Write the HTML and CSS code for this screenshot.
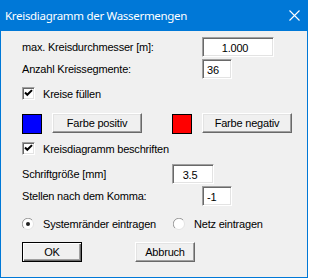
FILE: index.html
```
<!DOCTYPE html>
<html lang="de">
<head>
<meta charset="utf-8">
<title>Kreisdiagramm der Wassermengen</title>
<link rel="stylesheet" href="styles.css">
</head>
<body>
<div class="window">
  <div class="titlebar">
    <span class="title">Kreisdiagramm der Wassermengen</span>
    <svg class="close" width="11" height="11" viewBox="0 0 11 11"><path d="M0.5 0.5 L10.5 10.5 M10.5 0.5 L0.5 10.5" stroke="#fff" stroke-width="1.1" fill="none"/></svg>
  </div>
  <div class="content">
    <div class="row r1">
      <span class="label w180">max. Kreisdurchmesser [m]:</span>
      <div class="field wide center">1.000</div>
    </div>
    <div class="row r2">
      <span class="label w180">Anzahl Kreissegmente:</span>
      <div class="field small">36</div>
    </div>
    <div class="row r3 check-row">
      <span class="checkbox"><svg width="9" height="9" viewBox="0 0 9 9"><path d="M1 3.5 L3.3 5.8 L8 1.1" stroke="#000" stroke-width="2" fill="none"/></svg></span>
      <span class="check-label">Kreise füllen</span>
    </div>
    <div class="row r4">
      <span class="swatch blue"></span>
      <div class="btn color-btn">Farbe positiv</div>
      <span class="swatch red"></span>
      <div class="btn color-btn">Farbe negativ</div>
    </div>
    <div class="row r5 check-row">
      <span class="checkbox"><svg width="9" height="9" viewBox="0 0 9 9"><path d="M1 3.5 L3.3 5.8 L8 1.1" stroke="#000" stroke-width="2" fill="none"/></svg></span>
      <span class="check-label">Kreisdiagramm beschriften</span>
    </div>
    <div class="row r6">
      <span class="label w150">Schriftgröße [mm]</span>
      <div class="field mid center">3.5</div>
    </div>
    <div class="row r7">
      <span class="label w180">Stellen nach dem Komma:</span>
      <div class="field small">-1</div>
    </div>
    <div class="row r8">
      <div class="radio-item first">
        <svg class="radio" width="12" height="12" viewBox="0 0 12 12"><circle cx="6" cy="6" r="5.5" fill="#fff" stroke="#e3e3e3"/><path d="M1.9 10.1 A5.5 5.5 0 0 1 10.1 1.9" stroke="#a0a0a0" fill="none"/><circle cx="6" cy="6" r="2" fill="#222"/></svg>
        <span class="check-label">Systemränder eintragen</span>
      </div>
      <div class="radio-item">
        <svg class="radio" width="12" height="12" viewBox="0 0 12 12"><circle cx="6" cy="6" r="5.5" fill="#fff" stroke="#e3e3e3"/><path d="M1.9 10.1 A5.5 5.5 0 0 1 10.1 1.9" stroke="#a0a0a0" fill="none"/></svg>
        <span class="check-label">Netz eintragen</span>
      </div>
    </div>
    <div class="row r9">
      <div class="btn default action">OK</div>
      <div class="btn action">Abbruch</div>
    </div>
  </div>
</div>
</body>
</html>
```
FILE: styles.css
```
html, body {
  margin: 0;
  padding: 0;
  background: #ffffff;
}
body {
  font-family: "Liberation Sans", Arial, sans-serif;
  font-size: 11px;
  letter-spacing: -0.2px;
  color: #000;
}
.window {
  width: 308px;
  height: 278px;
  box-sizing: border-box;
  border: 1px solid #0078d7;
  border-top: 0;
  background: #f0f0f0;
  display: flex;
  flex-direction: column;
}
.titlebar {
  height: 30px;
  margin: 0 -1px;
  background: #0078d7;
  display: flex;
  align-items: center;
  justify-content: space-between;
  padding: 0 8px 1px 5px;
  color: #fff;
  font-family: "Noto Sans", "Open Sans", sans-serif;
  font-size: 11.5px;
  letter-spacing: -0.3px;
}
.close {
  display: block;
  margin-top: 1px;
}
.content {
  padding-left: 21px;
  display: flex;
  flex-direction: column;
}
.row {
  display: flex;
  align-items: center;
}
.r1 { margin-top: 6px; height: 20px; }
.r2 { margin-top: 2px; height: 20px; }
.r3 { margin-top: 8px; height: 13px; }
.r4 { margin-top: 13px; height: 21px; align-items: flex-start; }
.r5 { margin-top: 8px; height: 13px; }
.r6 { margin-top: 9px; height: 20px; }
.r7 { margin-top: 2px; height: 20px; }
.r8 { margin-top: 12px; height: 12px; }
.r9 { margin-top: 12px; height: 20px; }

.label { flex: none; white-space: nowrap; }
.w180 { width: 180px; }
.w150 { width: 150px; }

.field {
  box-sizing: border-box;
  height: 20px;
  background: #fff;
  border-top: 1px solid #a0a0a0;
  border-left: 1px solid #a0a0a0;
  border-right: 1px solid #fff;
  border-bottom: 1px solid #fff;
  box-shadow: inset 1px 1px 0 #696969, inset -1px -1px 0 #e3e3e3;
  display: flex;
  align-items: center;
  padding-left: 4px;
  padding-top: 1px;
}
.field.center { justify-content: center; padding-left: 0; padding-right: 6px; }
.wide { width: 72px; }
.small { width: 30px; }
.mid { width: 42px; }

.checkbox {
  box-sizing: border-box;
  width: 13px;
  height: 13px;
  background: #fff;
  border-top: 1px solid #a0a0a0;
  border-left: 1px solid #a0a0a0;
  border-right: 1px solid #fff;
  border-bottom: 1px solid #fff;
  box-shadow: inset 1px 1px 0 #696969, inset -1px -1px 0 #e3e3e3;
  display: flex;
  align-items: center;
  justify-content: center;
  flex: none;
}
.checkbox svg { display: block; }
.check-label { margin-left: 8px; white-space: nowrap; }

.swatch {
  box-sizing: border-box;
  width: 20px;
  height: 20px;
  border: 1px solid #000;
  margin-top: 1px;
  flex: none;
}
.blue { background: #0000ff; }
.red { background: #ff0000; margin-left: 30px; }

.btn {
  box-sizing: border-box;
  height: 20px;
  background: #f0f0f0;
  border-top: 1px solid #fff;
  border-left: 1px solid #fff;
  border-right: 1px solid #696969;
  border-bottom: 1px solid #696969;
  box-shadow: inset -1px -1px 0 #a0a0a0, inset 1px 1px 0 #e3e3e3;
  display: flex;
  align-items: center;
  justify-content: center;
  white-space: nowrap;
  flex: none;
}
.color-btn { width: 90px; margin-left: 10px; }
.action { width: 60px; }
.action + .action { margin-left: 53px; }
.btn.default {
  border: 1px solid #000;
  box-shadow: inset 1px 1px 0 #fff, inset -1px -1px 0 #696969, inset -2px -2px 0 #a0a0a0;
}

.radio-item { display: flex; align-items: center; }
.radio-item.first { width: 151px; }
.radio { display: block; flex: none; }
.radio-item .check-label { margin-left: 9px; }
```
